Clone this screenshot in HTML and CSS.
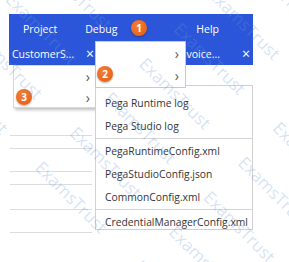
FILE: index.html
```html
<!DOCTYPE html>
<html lang="en">
<head>
	<meta http-equiv="Content-Type" content="text/html;charset=UTF-8">
	<link rel="stylesheet" href="styles.css">
</head>
<body>

<div class="screen">
	<div class="studio">
		<div class="studio__header">
			<nav class="menubar">
				<span class="menubar__item">Project</span>
				<span class="menubar__item menubar__item_debug">Debug</span>
				<span class="menubar__item menubar__item_help">Help</span>
			</nav>
			<div class="tabs">
				<div class="tab tab_first">
					<span class="tab__name">CustomerS...</span>
					<span class="tab__close">&times;</span>
				</div>
				<div class="tab tab_second">
					<span class="tab__name">Invoice...</span>
					<span class="tab__close">&times;</span>
				</div>
			</div>
		</div>
		<div class="workspace">
			<div class="workspace__row workspace__row_top"></div>
			<div class="workspace__row" style="height: 12px"></div>
			<div class="workspace__row" style="height: 22px"></div>
			<div class="workspace__row" style="height: 12px"></div>
			<div class="workspace__row" style="height: 24px"></div>
			<div class="workspace__row" style="height: 22px"></div>
		</div>
	</div>

	<!-- context menu on the left -->
	<ul class="menu menu_context">
		<li class="menu__item"><span class="menu__arrow">&rsaquo;</span></li>
		<li class="menu__item"><span class="menu__arrow">&rsaquo;</span></li>
	</ul>

	<!-- log files submenu -->
	<ul class="menu menu_logs">
		<li class="menu__item menu__item_text">Pega Runtime log</li>
		<li class="menu__item menu__item_text">Pega Studio log</li>
		<li class="menu__sep"></li>
		<li class="menu__item menu__item_text">PegaRuntimeConfig.xml</li>
		<li class="menu__item menu__item_text">PegaStudioConfig.json</li>
		<li class="menu__item menu__item_text">CommonConfig.xml</li>
		<li class="menu__sep"></li>
		<li class="menu__item menu__item_text">CredentialManagerConfig.xml</li>
	</ul>

	<!-- Debug dropdown -->
	<ul class="menu menu_debug">
		<li class="menu__item"><span class="menu__arrow">&rsaquo;</span></li>
		<li class="menu__item"><span class="menu__arrow">&rsaquo;</span></li>
	</ul>

	<span class="step step_1">1</span>
	<span class="step step_2">2</span>
	<span class="step step_3">3</span>

	<div class="watermark">
		<div class="watermark__grid">
			<span>ExamsTrust</span><span>ExamsTrust</span><span>ExamsTrust</span><span>ExamsTrust</span>
			<span>ExamsTrust</span><span>ExamsTrust</span><span>ExamsTrust</span><span>ExamsTrust</span>
			<span>ExamsTrust</span><span>ExamsTrust</span><span>ExamsTrust</span><span>ExamsTrust</span>
			<span>ExamsTrust</span><span>ExamsTrust</span><span>ExamsTrust</span><span>ExamsTrust</span>
			<span>ExamsTrust</span><span>ExamsTrust</span><span>ExamsTrust</span><span>ExamsTrust</span>
			<span>ExamsTrust</span><span>ExamsTrust</span><span>ExamsTrust</span><span>ExamsTrust</span>
			<span>ExamsTrust</span><span>ExamsTrust</span><span>ExamsTrust</span><span>ExamsTrust</span>
			<span>ExamsTrust</span><span>ExamsTrust</span><span>ExamsTrust</span><span>ExamsTrust</span>
		</div>
	</div>
</div>

</body>
</html>
```

FILE: styles.css
```css
body {
	margin: 0;
	padding: 0;
	background: #fff;
	font-family: "Open Sans", "Noto Sans", sans-serif;
}

.screen {
	position: relative;
	width: 289px;
	height: 262px;
	overflow: hidden;
	padding: 14px 0 0 9px;
	box-sizing: border-box;
}

.studio {
	width: 244px;
}

.studio__header {
	background: #2b56d9;
	color: #fff;
	font-size: 10.5px;
}

.menubar {
	display: flex;
	align-items: center;
	height: 29px;
	padding: 0 34px 0 14px;
}

.menubar__item_debug {
	margin-left: 28px;
}

.menubar__item_help {
	margin-left: auto;
}

.tabs {
	display: flex;
	justify-content: space-between;
	align-items: center;
	height: 22px;
	padding: 0 3px;
}

.tab {
	display: flex;
	align-items: center;
}

.tab_first {
	gap: 12px;
}

.tab_second {
	gap: 22px;
}

.tab__close {
	font-size: 14px;
	line-height: 1;
}

.workspace {
	width: 82px;
	margin-left: 1px;
}

.workspace__row {
	border-bottom: 1px solid #dcdcdc;
}

.workspace__row_top {
	height: 70px;
}

/* menus */

.menu {
	position: absolute;
	list-style: none;
	margin: 0;
	padding: 0;
	background: #fff;
	border: 1px solid #c9c9c9;
	box-sizing: border-box;
	font-size: 10.3px;
	color: #333;
}

.menu__item {
	display: flex;
	align-items: center;
	justify-content: flex-end;
	height: 22px;
	padding: 0 6px 0 9px;
}

.menu__item_text {
	justify-content: flex-start;
	height: 23px;
}

.menu__arrow {
	font-size: 14px;
	color: #555;
	line-height: 1;
}

.menu__sep {
	height: 1px;
	background: #d4d4d4;
	margin: 1px 0 0;
}

.menu_debug {
	left: 95px;
	top: 41px;
	width: 91px;
	height: 47px;
	padding-top: 1px;
}

.menu_context {
	left: 13px;
	top: 65px;
	width: 83px;
	height: 43px;
	border-color: #d8d8d8;
	box-shadow: 2px 2px 3px rgba(0, 0, 0, 0.25);
}

.menu_context .menu__item {
	height: 21px;
	padding-right: 5px;
}

.menu_logs {
	left: 95px;
	top: 85px;
	width: 158px;
	height: 145px;
	padding-top: 5px;
	border-color: #d0d0d0;
}

/* numbered markers */

.step {
	position: absolute;
	width: 16px;
	height: 16px;
	border-radius: 50%;
	background: radial-gradient(circle at 40% 35%, #f57d33, #e25b12);
	box-shadow: 0 1px 2px rgba(0, 0, 0, 0.3);
	color: #fff;
	font-family: "Open Sans", sans-serif;
	font-size: 10px;
	font-weight: 700;
	line-height: 16px;
	text-align: center;
}

.step_1 {
	left: 131px;
	top: 20px;
}

.step_2 {
	left: 97px;
	top: 66px;
}

.step_3 {
	left: 16px;
	top: 89px;
}

/* watermark */

.watermark {
	position: absolute;
	inset: 0;
	pointer-events: none;
	overflow: hidden;
}

.watermark__grid {
	position: absolute;
	left: -120px;
	top: -140px;
	width: 560px;
	display: grid;
	grid-template-columns: repeat(4, 130px);
	row-gap: 26px;
	column-gap: 10px;
	transform: rotate(45deg);
	transform-origin: 50% 50%;
	font-family: "Open Sans", sans-serif;
	font-size: 17px;
	color: rgba(110, 150, 215, 0.28);
}
```
